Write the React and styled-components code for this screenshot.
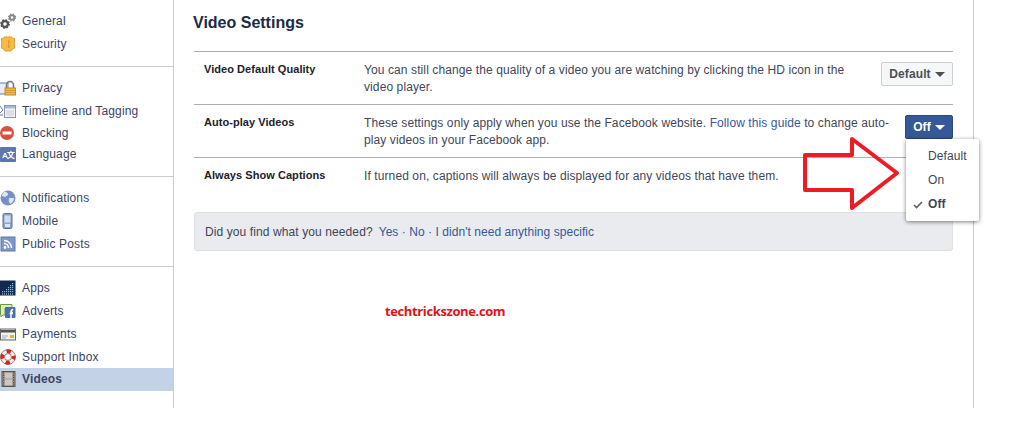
import React from "react";
import styled, { createGlobalStyle } from "styled-components";

const GlobalStyle = createGlobalStyle`
    html, body {
        margin: 0;
        padding: 0;
        background: #fff;
        font-family: "Liberation Sans", Arial, sans-serif;
    }
`;

const Page = styled.div`
    position: relative;
    display: flex;
    width: 1010px;
    height: 408px;
    font-size: 12px;
    letter-spacing: 0.1px;
`;

const SideBar = styled.div`
    width: 173px;
    flex-shrink: 0;
    border-right: 1px solid #ccc;
`;

const Group = styled.div`
    padding: ${props => props.$top}px 0 ${props => props.$bottom}px;
    border-bottom: ${props => (props.$last ? "none" : "1px solid #ccc")};
`;

const Row = styled.div`
    display: flex;
    align-items: center;
    gap: 6px;
    box-sizing: border-box;
    height: ${props => props.$h}px;
    padding-bottom: ${props => (props.$active ? "1px" : "0")};
    color: #3b4463;
    letter-spacing: 0.15px;
    font-weight: ${props => (props.$active ? "bold" : "normal")};
    background: ${props => (props.$active ? "#c4d2e7" : "transparent")};
    svg {
        flex-shrink: 0;
    }
`;

const Main = styled.div`
    width: 800px;
    flex-shrink: 0;
    padding: 13px 20px 0;
    box-sizing: border-box;
    border-right: 1px solid #ccc;
`;

const Title = styled.h2`
    margin: 0 0 18px -1px;
    font-size: 16px;
    line-height: 20px;
    font-weight: bold;
    letter-spacing: 0;
    color: #1d2a45;
`;

const SettingRow = styled.div`
    display: flex;
    align-items: flex-start;
    height: ${props => props.$h}px;
    padding-left: 10px;
    border-top: 1px solid #aeaeae;
    &:last-of-type {
        border-bottom: 1px solid #aeaeae;
    }
`;

const Label = styled.div`
    width: 160px;
    flex-shrink: 0;
    margin-top: 9px;
    font-size: 11px;
    line-height: 17px;
    font-weight: bold;
    color: #1d2129;
    letter-spacing: 0.05px;
`;

const Desc = styled.div`
    flex: 1;
    margin: 9px 10px 0 0;
    padding-top: 1px;
    line-height: 17px;
    color: #3f4658;
`;

const Link = styled.a`
    color: #365899;
`;

const FeedbackLinks = styled(Link)`
    letter-spacing: 0.05px;
`;

const SelectWrap = styled.div`
    position: relative;
    flex-shrink: 0;
    margin-top: ${props => props.$top}px;
`;

const SelectButton = styled.div`
    display: flex;
    align-items: center;
    justify-content: center;
    gap: 4px;
    box-sizing: border-box;
    width: ${props => props.$w}px;
    height: 24px;
    border: 1px solid ${props => (props.$open ? "#2f477a" : "#ccd0d5")};
    border-radius: 2px;
    font-weight: bold;
    color: ${props => (props.$open ? "#fff" : "#4b4f56")};
    background: ${props => (props.$open ? "#365899" : "#f6f7f9")};
`;

const Caret = styled.span`
    width: 0;
    height: 0;
    border-left: 5px solid transparent;
    border-right: 5px solid transparent;
    border-top: 5px solid currentColor;
`;

const Menu = styled.div`
    position: absolute;
    top: 100%;
    left: 1px;
    z-index: 2;
    box-sizing: border-box;
    width: 73px;
    padding: 5px 0;
    background: #fff;
    border-radius: 2px;
    box-shadow: 0 1px 4px rgba(0, 0, 0, 0.5);
`;

const MenuItem = styled.div`
    position: relative;
    height: 24px;
    line-height: 24px;
    padding-left: 22px;
    color: #3f4658;
    font-weight: ${props => (props.$checked ? "bold" : "normal")};
    svg {
        position: absolute;
        left: 7px;
        top: 9px;
    }
`;

const Feedback = styled.div`
    display: flex;
    align-items: center;
    gap: 6px;
    box-sizing: border-box;
    height: 39px;
    margin-top: 10px;
    padding: 1px 0 0 10px;
    background: #e9ebee;
    border: 1px solid #dddfe2;
    border-radius: 3px;
    color: #3f4658;
`;

const Watermark = styled.div`
    margin: 52px 0 0 191px;
    font-family: "Open Sans", sans-serif;
    font-size: 13px;
    line-height: 16px;
    font-weight: bold;
    letter-spacing: -0.38px;
    color: #e0131a;
`;

const Arrow = styled.svg`
    position: absolute;
    left: 800px;
    top: 134px;
    z-index: 3;
`;

const appDots = [
    [2, 11], [4, 11], [6, 11], [8, 11], [10, 11], [12, 11],
    [6, 9], [8, 9], [10, 9], [12, 9],
    [8, 7], [10, 7], [12, 7],
    [10, 5], [12, 5],
    [12, 3],
];

const icons = {
    general: (
        <>
            <circle cx="5" cy="11" r="3" fill="none" stroke="#555" strokeWidth="2.4" />
            <circle cx="5" cy="11" r="4.2" fill="none" stroke="#555" strokeWidth="1.4" strokeDasharray="1.6 1.7" />
            <circle cx="12" cy="4.5" r="2.3" fill="none" stroke="#888" strokeWidth="2" />
            <circle cx="12" cy="4.5" r="3.5" fill="none" stroke="#888" strokeWidth="1.2" strokeDasharray="1.4 1.4" />
        </>
    ),
    security: (
        <>
            <path d="M1.5 2.5 Q3.5 2.5 4.5 1 H11.5 Q12.5 2.5 14.5 2.5 V5 Q13.5 7 14.5 9 V12 Q12 12.5 11 15 H5 Q4 12.5 1.5 12 V9 Q2.5 7 1.5 5Z" fill="#f5bb45" stroke="#d99c2e" />
            <path d="M8 3.5 L10.5 6 L9 8 L10 11 L8 12.5Z" fill="#dd9d2a" />
        </>
    ),
    privacy: (
        <>
            <rect x="-4" y="3" width="12" height="11" fill="#e8eef8" stroke="#5f7cb0" />
            <path d="M6.5 8 V5 a3.5 3.5 0 0 1 7 0 V8" fill="none" stroke="#777" strokeWidth="1.6" />
            <rect x="5" y="8" width="10.5" height="7" fill="#f3b94a" stroke="#c08a26" />
            <path d="M5 10.5 H15.5 M5 12.5 H15.5" stroke="#d59a30" />
        </>
    ),
    timeline: (
        <>
            <path d="M0 3 L3 7 L0 10 M0 12 H3" fill="none" stroke="#5f7cb0" />
            <rect x="4.5" y="2.5" width="11" height="12" fill="#f4f5f7" stroke="#8a94a8" />
            <rect x="5" y="3" width="10" height="2.5" fill="#a9b9d6" />
            <path d="M6 8 H14 M6 10 H14 M6 12 H14" stroke="#c6c9d0" />
        </>
    ),
    blocking: (
        <>
            <circle cx="7" cy="8" r="7" fill="#d9503f" />
            <rect x="2.5" y="6.5" width="9" height="3" fill="#fff" />
        </>
    ),
    language: (
        <>
            <rect x="0" y="1" width="16" height="15" rx="1" fill="#5b77ad" />
            <text x="2" y="12" fontSize="8" fontWeight="bold" fill="#fff" fontFamily="Liberation Sans, Noto Sans CJK SC" letterSpacing="-1">A文</text>
        </>
    ),
    notifications: (
        <>
            <circle cx="8" cy="8" r="7.5" fill="#7590c4" />
            <path d="M5 1.5 Q9 3 8 5 L5 7 L2 6 Q2 3 5 1.5Z M9 8 L14 8 Q14 12 10 14 Q8 11 9 8Z" fill="#dde5f3" />
        </>
    ),
    mobile: (
        <>
            <rect x="3" y="0.5" width="9" height="15" rx="1.5" fill="#8ea3c8" stroke="#5a6f99" />
            <rect x="4.5" y="2.5" width="6" height="7" fill="#cfdaee" />
            <rect x="5" y="11" width="5" height="3" fill="#dfe4ee" />
        </>
    ),
    rss: (
        <>
            <rect x="1" y="1" width="14" height="14" fill="#7f97c4" stroke="#6079ab" />
            <circle cx="5" cy="11.5" r="1.4" fill="#fff" />
            <path d="M4 7.5 a4.5 4.5 0 0 1 4.5 4.5 M4 4.5 a7.5 7.5 0 0 1 7.5 7.5" fill="none" stroke="#fff" strokeWidth="1.4" />
        </>
    ),
    apps: (
        <>
            <rect x="0" y="0.5" width="15.5" height="15" fill="#14284f" />
            {appDots.map(([x, y]) => (
                <rect key={`${x}-${y}`} x={x} y={y} width="1.2" height="1.2" fill="#7fb2e5" />
            ))}
            <path d="M2 14 H13" stroke="#dfe9f5" strokeDasharray="1 1" />
        </>
    ),
    adverts: (
        <>
            <path d="M0.5 1.5 H12 V5 H5 V12 H3 L1 14 V12 H0.5Z" fill="#dcebc9" stroke="#6b9a45" />
            <rect x="5" y="4" width="10.5" height="11" rx="1" fill="#4d6fa9" />
            <path d="M11 15 V9.5 H13 M9.5 10.5 H13 M11 9.5 Q11 6.5 13.2 6.5" fill="none" stroke="#fff" strokeWidth="1.5" />
        </>
    ),
    payments: (
        <>
            <rect x="0.5" y="3" width="15" height="11" fill="#f2f2f2" stroke="#666" />
            <rect x="1" y="4" width="14" height="2.5" fill="#555" />
            <path d="M2 10 H8 M2 12 H6" stroke="#aaa" />
            <rect x="10" y="9" width="4" height="3" fill="#e2b23d" />
        </>
    ),
    support: (
        <>
            <circle cx="8" cy="8" r="5.5" fill="none" stroke="#eee" strokeWidth="4" />
            <circle cx="8" cy="8" r="5.5" fill="none" stroke="#d9261c" strokeWidth="4" strokeDasharray="4.3 4.34" strokeDashoffset="2.1" />
            <circle cx="8" cy="8" r="7.5" fill="none" stroke="#8a2a22" strokeWidth="0.6" />
            <circle cx="8" cy="8" r="3.4" fill="#fff" stroke="#8a2a22" strokeWidth="0.6" />
        </>
    ),
    videos: (
        <>
            <rect x="2" y="0.5" width="13" height="15" fill="#a49a8e" stroke="#5d544c" />
            <rect x="5" y="2" width="7" height="5.5" fill="#c9c8c6" />
            <rect x="5" y="8.5" width="7" height="5.5" fill="#c9c8c6" />
            <path d="M3.5 1 V15 M13.5 1 V15" stroke="#5d544c" strokeDasharray="1.5 1" />
        </>
    ),
};

const groups = [
    {
        top: 9, bottom: 11,
        items: [
            { icon: "general", name: "General", h: 23 },
            { icon: "security", name: "Security", h: 23 },
        ],
    },
    {
        top: 9, bottom: 12,
        items: [
            { icon: "privacy", name: "Privacy", h: 23 },
            { icon: "timeline", name: "Timeline and Tagging", h: 23 },
            { icon: "blocking", name: "Blocking", h: 21 },
            { icon: "language", name: "Language", h: 21 },
        ],
    },
    {
        top: 9, bottom: 11,
        items: [
            { icon: "notifications", name: "Notifications", h: 23 },
            { icon: "mobile", name: "Mobile", h: 23 },
            { icon: "rss", name: "Public Posts", h: 23 },
        ],
    },
    {
        top: 9, bottom: 0, last: true,
        items: [
            { icon: "apps", name: "Apps", h: 23 },
            { icon: "adverts", name: "Adverts", h: 23 },
            { icon: "payments", name: "Payments", h: 23 },
            { icon: "support", name: "Support Inbox", h: 23 },
            { icon: "videos", name: "Videos", h: 23, active: true },
        ],
    },
];

function Icon({ name }) {
    return (
        <svg width="16" height="16" viewBox="0 0 16 16">
            {icons[name]}
        </svg>
    );
}

export default function App() {
    return (
        <Page>
            <GlobalStyle />
            <SideBar>
                {groups.map((group, i) => (
                    <Group key={i} $top={group.top} $bottom={group.bottom} $last={group.last}>
                        {group.items.map(item => (
                            <Row key={item.name} $h={item.h} $active={item.active}>
                                <Icon name={item.icon} />
                                {item.name}
                            </Row>
                        ))}
                    </Group>
                ))}
            </SideBar>
            <Main>
                <Title>Video Settings</Title>
                <SettingRow $h={52}>
                    <Label>Video Default Quality</Label>
                    <Desc>
                        You can still change the quality of a video you are watching by clicking the HD icon in the video player.
                    </Desc>
                    <SelectWrap $top={10}>
                        <SelectButton $w={72}>Default <Caret /></SelectButton>
                    </SelectWrap>
                </SettingRow>
                <SettingRow $h={52}>
                    <Label>Auto-play Videos</Label>
                    <Desc>
                        These settings only apply when you use the Facebook website. <Link>Follow this guide</Link> to change auto-play videos in your Facebook app.
                    </Desc>
                    <SelectWrap $top={10}>
                        <SelectButton $w={48} $open>Off <Caret /></SelectButton>
                        <Menu>
                            <MenuItem>Default</MenuItem>
                            <MenuItem>On</MenuItem>
                            <MenuItem $checked>
                                <svg width="10" height="8" viewBox="0 0 10 8">
                                    <path d="M1 4 L3.5 6.5 L9 1" fill="none" stroke="#5a5f68" strokeWidth="1.6" />
                                </svg>
                                Off
                            </MenuItem>
                        </Menu>
                    </SelectWrap>
                </SettingRow>
                <SettingRow $h={44}>
                    <Label>Always Show Captions</Label>
                    <Desc>If turned on, captions will always be displayed for any videos that have them.</Desc>
                </SettingRow>
                <Feedback>
                    Did you find what you needed?
                    <FeedbackLinks>Yes · No · I didn't need anything specific</FeedbackLinks>
                </Feedback>
                <Watermark>techtrickszone.com</Watermark>
            </Main>
            <Arrow width="104" height="80" viewBox="0 0 104 80">
                <path d="M5 21 H52 V5 L97 39 L52 74 V56 H5Z" fill="none" stroke="#ed1c24" strokeWidth="4" strokeLinejoin="round" />
            </Arrow>
        </Page>
    );
}
